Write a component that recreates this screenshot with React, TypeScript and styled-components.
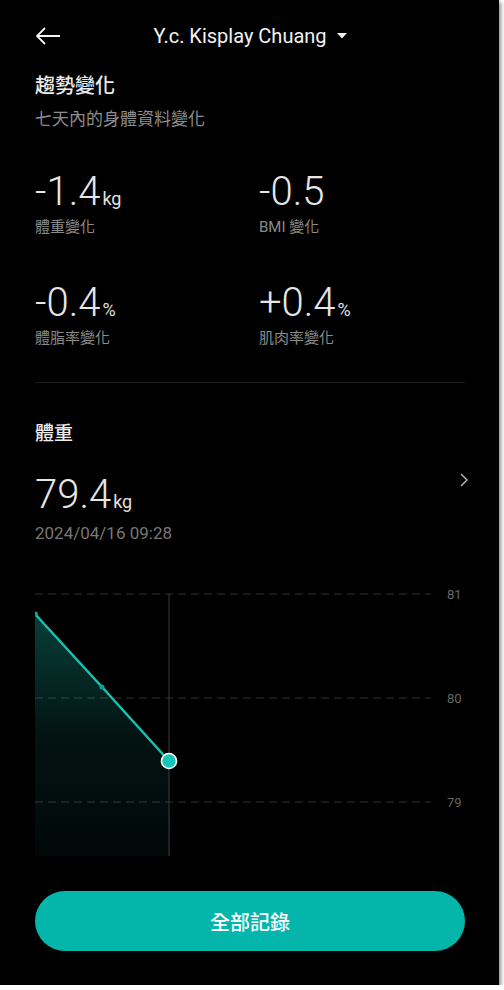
import React from "react";
import styled, { createGlobalStyle } from "styled-components";

const Global = createGlobalStyle`
  html, body { margin: 0; padding: 0; background: #ffffff; }
  body { font-family: Roboto, "Noto Sans CJK TC", sans-serif; }
`;

const Frame = styled.div`
  width: 499px;
  height: 985px;
  background: #000;
  box-shadow: 2px 2px 4px rgba(0, 0, 0, 0.45);
  box-sizing: border-box;
  padding: 0 34px 0 35px;
  display: flex;
  flex-direction: column;
  color: #e8e8e8;
  font-family: Roboto, "Noto Sans CJK TC", sans-serif;
`;

const Header = styled.header`
  height: 72px;
  display: grid;
  grid-template-columns: 1fr auto 1fr;
  align-items: center;
`;

const BackButton = styled.div`
  display: flex;
  align-items: center;
  height: 20px;
`;

const HeaderTitle = styled.div`
  display: flex;
  align-items: center;
  gap: 10px;
  font-size: 20px;
  color: #f2f2f2;
  white-space: nowrap;
`;

const SectionTitle = styled.div<{ $mt?: number }>`
  font-size: ${(p) => (p.$mt !== undefined ? 19 : 20)}px;
  line-height: 28px;
  height: 28px;
  font-weight: 500;
  color: #ececec;
  margin-top: ${(p) => p.$mt ?? 0}px;
`;

const Subtitle = styled.div`
  font-size: 17px;
  line-height: 24px;
  height: 24px;
  color: #8d8d8d;
  margin-top: 7px;
`;

const StatGrid = styled.div`
  margin-top: 37px;
  display: grid;
  grid-template-columns: 224px 1fr;
  row-gap: 42px;
`;

const Stat = styled.div`
  display: flex;
  flex-direction: column;
`;

const BigValue = styled.div`
  font-size: 40px;
  line-height: 48px;
  height: 48px;
  font-weight: 300;
  color: #e6e6e6;
  white-space: nowrap;
`;

const Unit = styled.span`
  font-size: 18px;
  line-height: 0;
  font-weight: 400;
  margin-left: 2px;
  color: #e0e0e0;
`;

const StatLabel = styled.div`
  font-size: 15px;
  line-height: 20px;
  height: 20px;
  margin-top: 1px;
  color: #8a8a8a;
`;

const Divider = styled.div`
  height: 1px;
  background: #1e1e1e;
  margin-top: 34px;
`;

const WeightRow = styled.div`
  margin-top: 23px;
  display: flex;
  align-items: center;
  justify-content: space-between;
`;

const Chevron = styled.div`
  margin-right: -4px;
  margin-top: -30px;
  display: flex;
`;

const DateText = styled.div`
  font-size: 17px;
  line-height: 24px;
  height: 24px;
  color: #777;
  margin-top: 2px;
`;

const ChartBox = styled.div`
  margin-top: 35px;
  height: 280px;
  width: 430px;
`;

const AllButton = styled.button`
  margin-top: 31px;
  height: 60px;
  width: 430px;
  border: none;
  border-radius: 30px;
  background: #03b5ab;
  color: #fff;
  font-size: 20px;
  font-family: Roboto, "Noto Sans CJK TC", sans-serif;
  font-weight: 500;
  cursor: pointer;
`;

const stats = [
  { value: "-1.4", unit: "kg", label: "體重變化" },
  { value: "-0.5", unit: "", label: "BMI 變化" },
  { value: "-0.4", unit: "%", label: "體脂率變化" },
  { value: "+0.4", unit: "%", label: "肌肉率變化" },
];

const Chart = () => {
  const grid = [
    { y: 14, label: "81" },
    { y: 118, label: "80" },
    { y: 222, label: "79" },
  ];
  return (
    <svg width="430" height="280" viewBox="0 0 430 280">
      <defs>
        <linearGradient id="fillg" x1="0" y1="34" x2="0" y2="276" gradientUnits="userSpaceOnUse">
          <stop offset="0" stopColor="#18c4b4" stopOpacity="0.32" />
          <stop offset="0.5" stopColor="#18c4b4" stopOpacity="0.1" />
          <stop offset="1" stopColor="#18c4b4" stopOpacity="0.04" />
        </linearGradient>
      </defs>
      {grid.map((g) => (
        <g key={g.label}>
          <line x1="0" x2="396" y1={g.y} y2={g.y} stroke="#333" strokeWidth="1" strokeDasharray="8 5" />
          <text x="412" y={g.y} dominantBaseline="central" fontSize="13" fill="#666" fontFamily="Roboto, sans-serif">
            {g.label}
          </text>
        </g>
      ))}
      <polygon points="0,34 134,181 134,276 0,276" fill="url(#fillg)" />
      <line x1="134" x2="134" y1="14" y2="276" stroke="#3c3c3c" strokeWidth="1" />
      <polyline points="0,34 67,107 134,181" fill="none" stroke="#17c2b2" strokeWidth="2.5" />
      <circle cx="0.5" cy="34" r="2.5" fill="#129e92" />
      <circle cx="67" cy="107" r="2.5" fill="#129e92" />
      <circle cx="134" cy="181" r="7.5" fill="#14c4b6" stroke="#fff" strokeWidth="1.6" />
    </svg>
  );
};

export default function App() {
  return (
    <>
      <Global />
      <Frame>
        <Header>
          <BackButton>
            <svg width="26" height="18" viewBox="0 0 26 18">
              <path d="M25 9 H2 M10 1 L2 9 L10 17" fill="none" stroke="#f2f2f2" strokeWidth="1.8" />
            </svg>
          </BackButton>
          <HeaderTitle>
            Y.c. Kisplay Chuang
            <svg width="10" height="6" viewBox="0 0 10 6">
              <path d="M0 0 H10 L5 5.5 Z" fill="#f2f2f2" />
            </svg>
          </HeaderTitle>
          <div />
        </Header>
        <SectionTitle>趨勢變化</SectionTitle>
        <Subtitle>七天內的身體資料變化</Subtitle>
        <StatGrid>
          {stats.map((s) => (
            <Stat key={s.label}>
              <BigValue>
                {s.value}
                {s.unit && <Unit>{s.unit}</Unit>}
              </BigValue>
              <StatLabel>{s.label}</StatLabel>
            </Stat>
          ))}
        </StatGrid>
        <Divider />
        <SectionTitle $mt={37}>體重</SectionTitle>
        <WeightRow>
          <BigValue>
            79.4<Unit>kg</Unit>
          </BigValue>
          <Chevron>
            <svg width="10" height="16" viewBox="0 0 10 16">
              <path d="M2 2 L8 8 L2 14" fill="none" stroke="#bbb" strokeWidth="1.4" />
            </svg>
          </Chevron>
        </WeightRow>
        <DateText>2024/04/16 09:28</DateText>
        <ChartBox>
          <Chart />
        </ChartBox>
        <AllButton>全部記錄</AllButton>
      </Frame>
    </>
  );
}
